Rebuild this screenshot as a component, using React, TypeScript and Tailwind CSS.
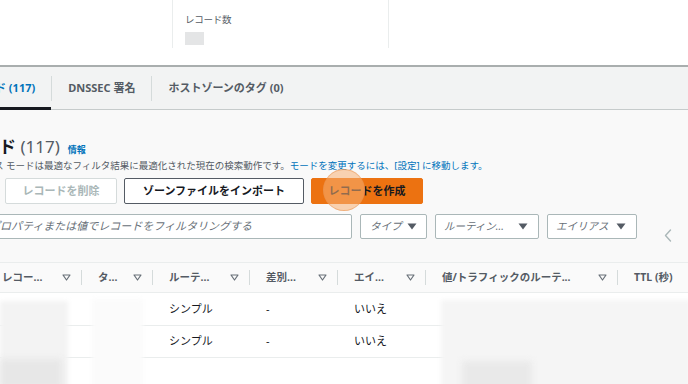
import React from "react";

/**
 * Route 53 hosted zone – records tab (cropped view, Japanese UI).
 */

function SortIcon() {
  return (
    <svg className="w-[9px] h-[7px] shrink-0" viewBox="0 0 9 7" aria-hidden="true">
      <path d="M1 1h7L4.5 6z" fill="none" stroke="#687078" strokeWidth="1.2" strokeLinejoin="round" />
    </svg>
  );
}

function CaretDown() {
  return (
    <svg className="w-[10px] h-[7px] shrink-0" viewBox="0 0 10 7" aria-hidden="true">
      <path d="M0.5 0.5h9L5 6.5z" fill="#545b64" />
    </svg>
  );
}

const columns = [
  { label: "レコー...", width: "w-[96px]" },
  { label: "タ...", width: "w-[71px]" },
  { label: "ルーテ...", width: "w-[97px]" },
  { label: "差別...", width: "w-[88px]" },
  { label: "エイ...", width: "w-[88px]" },
  { label: "値/トラフィックのルーテ...", width: "w-[192px]" },
  { label: "TTL (秒)", width: "w-[130px]" },
];

const rows = [
  { routing: "シンプル", diff: "-", alias: "いいえ", h: "h-[33px]" },
  { routing: "シンプル", diff: "-", alias: "いいえ", h: "h-[32px]" },
  { routing: "", diff: "", alias: "", h: "h-[32px]" },
];

export default function App() {
  return (
    <div className="w-[688px] h-[384px] overflow-hidden bg-white text-[#16191f] font-['Noto_Sans','Noto_Sans_CJK_JP',sans-serif]">
      {/* Summary panel */}
      <div className="flex h-[65px] bg-white">
        <div className="w-[172px]" />
        <div className="w-[217px] h-[48px] border-x border-[#eaeded] pl-[12px] pt-[13px]">
          <p className="text-[9.5px] leading-[14px] text-[#545b64] tracking-tight">レコード数</p>
          <div className="mt-[5px] w-[19px] h-[13px] bg-[#e4e5e6] blur-[0.6px]" />
        </div>
      </div>
      <div className="h-[2px] bg-[#a9aeae]" />

      {/* Tabs */}
      <div className="h-[43px] bg-[#f2f3f3] border-b border-[#c6cbcb] flex items-stretch ml-[-54px]">
        <div className="relative flex items-center px-4">
          <span className="text-[11px] font-bold text-[#0073bb] whitespace-nowrap">レコード (117)</span>
          <span className="absolute left-0 right-0 bottom-[-1px] h-[3px] bg-[#16191f]" />
        </div>
        <span className="self-center w-px h-[25px] bg-[#d5dbdb]" />
        <div className="flex items-center px-4">
          <span className="text-[11px] font-bold text-[#545b64] whitespace-nowrap">DNSSEC 署名</span>
        </div>
        <span className="self-center w-px h-[25px] bg-[#d5dbdb]" />
        <div className="flex items-center px-4">
          <span className="text-[11px] font-bold text-[#545b64] whitespace-nowrap">ホストゾーンのタグ (0)</span>
        </div>
      </div>

      {/* Records container */}
      <div className="bg-[#f9f9f9] pt-[25px]">
        <div className="flex items-baseline gap-[8px] ml-[-52px] h-[24px] leading-[24px]">
          <h2 className="text-[17px] font-bold whitespace-nowrap">
            レコード <span className="font-normal text-[#545b64]">(117)</span>
          </h2>
          <span className="text-[9px] font-bold text-[#0073bb]">情報</span>
        </div>
        <p className="ml-[-6px] text-[9.5px] leading-[14px] text-[#545b64] whitespace-nowrap">
          ス モードは最適なフィルタ結果に最適化された現在の検索動作です。
          <span className="text-[#0073bb]">モードを変更するには、[設定] に移動します。</span>
        </p>

        {/* Actions */}
        <div className="flex items-center gap-[7px] pl-[5px] mt-[5px]">
          <button className="h-[26px] w-[112px] border border-[#d5dbdb] bg-white rounded-[2px] text-[11px] font-bold text-[#aab7b8]">
            レコードを削除
          </button>
          <button className="h-[26px] w-[180px] border border-[#545b64] bg-white rounded-[2px] text-[11px] font-bold text-[#16191f]">
            ゾーンファイルをインポート
          </button>
          <button className="relative h-[26px] w-[112px] border border-[#ec7211] bg-[#ec7211] rounded-[2px] text-[11px] font-bold text-[#16191f]">
            レコードを作成
            <span className="absolute left-[11px] top-[-10px] w-[42px] h-[42px] rounded-full bg-[#f7b074]/55 border border-[#e8904a]/50" />
          </button>
        </div>

        {/* Filters */}
        <div className="flex items-start mt-[10px] ml-[-20px]">
          <div className="h-[25px] w-[372px] border border-[#aab7b8] bg-white rounded-[2px] flex items-center pl-[8px]">
            <span className="text-[11px] italic text-[#687078] whitespace-nowrap">プロパティまたは値でレコードをフィルタリングする</span>
          </div>
          <div className="ml-[8px] h-[25px] w-[67px] border border-[#aab7b8] bg-white rounded-[2px] flex items-center justify-between pl-[9px] pr-[9px]">
            <span className="text-[10.5px] italic text-[#687078]">タイプ</span>
            <CaretDown />
          </div>
          <div className="ml-[8px] h-[25px] w-[104px] border border-[#aab7b8] bg-white rounded-[2px] flex items-center justify-between pl-[8px] pr-[10px]">
            <span className="text-[10.5px] italic text-[#687078] whitespace-nowrap">ルーティン...</span>
            <CaretDown />
          </div>
          <div className="ml-[8px] h-[25px] w-[90px] border border-[#aab7b8] bg-white rounded-[2px] flex items-center justify-between pl-[8px] pr-[10px]">
            <span className="text-[10.5px] italic text-[#687078] whitespace-nowrap">エイリアス</span>
            <CaretDown />
          </div>
          <svg className="ml-[27px] mt-[15px] w-[8px] h-[13px]" viewBox="0 0 8 13" aria-hidden="true">
            <path d="M6.5 1L1.5 6.5l5 5.5" fill="none" stroke="#aab7b8" strokeWidth="1.4" strokeLinecap="round" strokeLinejoin="round" />
          </svg>
        </div>
        <div className="h-[20px]" />
      </div>

      {/* Table */}
      <div className="border-t border-[#eaeded] bg-white">
        <div className="flex ml-[-14px] h-[30px] bg-[#fafafa] border-b border-[#eaeded]">
          {columns.map((c, i) => (
            <div key={i} className={`${c.width} shrink-0 flex items-center pl-4`}>
              <span className="text-[10.5px] font-bold text-[#545b64] whitespace-nowrap">{c.label}</span>
              <span className="flex-1" />
              <SortIcon />
              <span className="ml-[10px] w-px h-[15px] bg-[#d5dbdb]" />
            </div>
          ))}
        </div>
        <div className="relative">
          {rows.map((r, i) => (
            <div key={i} className={`flex ml-[-14px] ${r.h} border-b border-[#eaeded] items-center`}>
              <div className="w-[96px] shrink-0" />
              <div className="w-[71px] shrink-0" />
              <div className="w-[97px] shrink-0 pl-4 text-[11px]">{r.routing}</div>
              <div className="w-[88px] shrink-0 pl-4 text-[11px]">{r.diff}</div>
              <div className="w-[88px] shrink-0 pl-4 text-[11px]">{r.alias}</div>
            </div>
          ))}
          {/* redacted (pixelated) values */}
          <div className="absolute left-0 top-[8px] w-[68px] h-[90px] bg-[#f3f3f3] blur-[2px]" />
          <div className="absolute left-0 top-[66px] w-[62px] h-[30px] bg-[#e7e7e7] blur-[3px]" />
          <div className="absolute left-[92px] top-[6px] w-[51px] h-[90px] bg-[#fbfbfb] blur-[2px]" />
          <div className="absolute left-[441px] top-[7px] w-[250px] h-[90px] bg-[#f5f5f5] blur-[2px]" />
          <div className="absolute left-[462px] top-[68px] w-[70px] h-[30px] bg-[#e9e9e9] blur-[3px]" />
        </div>
      </div>
    </div>
  );
}
